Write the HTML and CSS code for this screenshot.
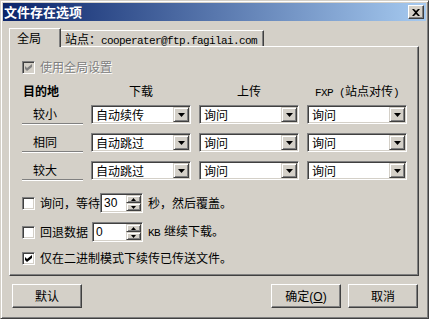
FILE: index.html
```html
<!DOCTYPE html>
<html lang="zh-CN">
<head>
    <meta charset="UTF-8">
    <title>文件存在选项</title>
    <link rel="stylesheet" href="styles.css">
</head>
<body>
    <div class="win">
        <div class="titlebar">
            <span class="title">文件存在选项</span>
            <span class="close">
                <svg width="8" height="7" viewBox="0 0 8 7"><path d="M0 0h2l2 2 2-2h2L5 3.5 8 7H6L4 5 2 7H0l3-3.5z" fill="#000"/></svg>
            </span>
        </div>
        <div class="content">
            <div class="tabs">
                <div class="tab active">全局</div>
                <div class="tab">站点：<span class="mono">cooperater@ftp.fagilai.com</span></div>
            </div>
            <div class="panel">
                <div class="check-row usecheck disabled">
                    <span class="cb checked"><svg width="7" height="7" viewBox="0 0 7 7"><path d="M0 2l2 2 5-4v3L2 7 0 5z" fill="#808080"/></svg></span>
                    使用全局设置
                </div>
                <div class="heads">
                    <div class="head first">目的地</div>
                    <div class="head">下载</div>
                    <div class="head">上传</div>
                    <div class="head"><span class="mono">FXP (</span>站点对传<span class="mono">)</span></div>
                </div>
                <div class="grid">
                    <div class="label">较小</div>
                    <div class="combo">自动续传<span class="arrow"><svg width="7" height="4" viewBox="0 0 7 4"><path d="M0 0h7L3.5 4z"/></svg></span></div>
                    <div class="combo">询问<span class="arrow"><svg width="7" height="4" viewBox="0 0 7 4"><path d="M0 0h7L3.5 4z"/></svg></span></div>
                    <div class="combo">询问<span class="arrow"><svg width="7" height="4" viewBox="0 0 7 4"><path d="M0 0h7L3.5 4z"/></svg></span></div>

                    <div class="label">相同</div>
                    <div class="combo">自动跳过<span class="arrow"><svg width="7" height="4" viewBox="0 0 7 4"><path d="M0 0h7L3.5 4z"/></svg></span></div>
                    <div class="combo">询问<span class="arrow"><svg width="7" height="4" viewBox="0 0 7 4"><path d="M0 0h7L3.5 4z"/></svg></span></div>
                    <div class="combo">询问<span class="arrow"><svg width="7" height="4" viewBox="0 0 7 4"><path d="M0 0h7L3.5 4z"/></svg></span></div>

                    <div class="label">较大</div>
                    <div class="combo">自动跳过<span class="arrow"><svg width="7" height="4" viewBox="0 0 7 4"><path d="M0 0h7L3.5 4z"/></svg></span></div>
                    <div class="combo">询问<span class="arrow"><svg width="7" height="4" viewBox="0 0 7 4"><path d="M0 0h7L3.5 4z"/></svg></span></div>
                    <div class="combo">询问<span class="arrow"><svg width="7" height="4" viewBox="0 0 7 4"><path d="M0 0h7L3.5 4z"/></svg></span></div>
                </div>
                <div class="check-row opt opt1">
                    <span class="cb"></span>
                    询问，等待
                    <div class="spin spin1">30<span class="spin-btns"><span class="sb"><svg width="5" height="3" viewBox="0 0 5 3"><path d="M0 3h5L2.5 0z"/></svg></span><span class="sb"><svg width="5" height="3" viewBox="0 0 5 3"><path d="M0 0h5L2.5 3z"/></svg></span></span></div>
                    <span class="after">秒，然后覆盖。</span>
                </div>
                <div class="check-row opt opt2">
                    <span class="cb"></span>
                    回退数据
                    <div class="spin spin2">0<span class="spin-btns"><span class="sb"><svg width="5" height="3" viewBox="0 0 5 3"><path d="M0 3h5L2.5 0z"/></svg></span><span class="sb"><svg width="5" height="3" viewBox="0 0 5 3"><path d="M0 0h5L2.5 3z"/></svg></span></span></div>
                    <span class="after"><span class="mono kb">KB</span>继续下载。</span>
                </div>
                <div class="check-row opt opt3">
                    <span class="cb checked"><svg width="7" height="7" viewBox="0 0 7 7"><path d="M0 2l2 2 5-4v3L2 7 0 5z" fill="#000"/></svg></span>
                    仅在二进制模式下续传已传送文件。
                </div>
            </div>
            <div class="buttons">
                <button class="btn">默认</button>
                <span class="spacer"></span>
                <button class="btn">确定<span class="latin">(<u>O</u>)</span></button>
                <button class="btn">取消</button>
            </div>
        </div>
    </div>
</body>
</html>
```

FILE: styles.css
```css
* {
    margin: 0;
    padding: 0;
    box-sizing: border-box;
}
body {
    font: 12px/14px "Noto Sans CJK SC", sans-serif;
    color: #000;
}
.win {
    width: 429px;
    height: 319px;
    background: #d4d0c8;
    border: 1px solid;
    border-color: #d4d0c8 #404040 #404040 #d4d0c8;
    box-shadow: inset 1px 1px #fff, inset -1px -1px #808080;
    padding: 2px;
}
.titlebar {
    height: 18px;
    background: linear-gradient(to right, #0a246a, #a6caf0);
    display: flex;
    align-items: center;
    justify-content: space-between;
    padding: 0 2px 0 1px;
}
.title {
    color: #fff;
    font-weight: bold;
    font-size: 13px;
}
.close {
    width: 16px;
    height: 14px;
    display: flex;
    align-items: center;
    justify-content: center;
    background: #d4d0c8;
    border: 1px solid;
    border-color: #fff #404040 #404040 #fff;
    box-shadow: inset -1px -1px #808080;
}
.content {
    padding: 7px 7px 0 6px;
}
.mono {
    font-family: "Liberation Mono", monospace;
    font-size: 11px;
    letter-spacing: -0.6px;
}
.tabs {
    display: flex;
    align-items: flex-end;
    height: 18px;
}
.tab {
    height: 16px;
    background: #d4d0c8;
    border-top: 1px solid #fff;
    border-right: 1px solid #404040;
    box-shadow: inset -1px 0 #808080;
    padding: 1px 6px 0 4px;
}
.tab.active {
    height: 19px;
    margin-bottom: -1px;
    position: relative;
    z-index: 1;
    border-left: 1px solid #fff;
    padding: 2px 19px 0 7px;
    width: 52px;
}
.panel {
    height: 230px;
    border: 1px solid;
    border-color: #fff #404040 #404040 #fff;
    box-shadow: inset -1px -1px #808080;
    padding-left: 12px;
}
.check-row {
    display: flex;
    align-items: center;
    height: 14px;
}
.cb {
    width: 13px;
    height: 13px;
    flex: none;
    margin-right: 5px;
    display: flex;
    align-items: center;
    justify-content: center;
    background: #fff;
    border: 1px solid;
    border-color: #808080 #fff #fff #808080;
    box-shadow: inset 1px 1px #404040, inset -1px -1px #d4d0c8;
}
.disabled {
    color: #808080;
    text-shadow: 1px 1px #fff;
}
.disabled .cb {
    background: #d4d0c8;
}
.usecheck {
    margin-top: 13px;
}
.heads,
.grid {
    display: grid;
    grid-template-columns: 61px 100px 100px 100px;
    column-gap: 8px;
}
.heads {
    margin-top: 10px;
}
.head {
    text-align: center;
}
.head.first {
    text-align: left;
    font-weight: bold;
    padding-left: 1px;
}
.grid {
    margin-top: 5px;
    row-gap: 9px;
}
.label {
    height: 19px;
    line-height: 18px;
    padding-left: 11px;
    border-bottom: 1px solid #808080;
    box-shadow: 0 1px #fff;
}
.combo {
    height: 19px;
    display: flex;
    align-items: center;
    padding: 1px 1px 1px 4px;
    background: #fff;
    border: 1px solid;
    border-color: #808080 #fff #fff #808080;
    box-shadow: inset 1px 1px #404040, inset -1px -1px #d4d0c8;
}
.arrow {
    margin-left: auto;
    width: 16px;
    height: 15px;
    display: flex;
    align-items: center;
    justify-content: center;
    background: #d4d0c8;
    border: 1px solid;
    border-color: #d4d0c8 #404040 #404040 #d4d0c8;
    box-shadow: inset 1px 1px #fff, inset -1px -1px #808080;
}
.opt {
    height: 20px;
}
.opt1 {
    margin-top: 13px;
}
.opt2 {
    margin-top: 9px;
}
.opt3 {
    margin-top: 8px;
    height: 16px;
}
.spin {
    height: 20px;
    display: flex;
    align-items: center;
    padding: 1px 1px 1px 3px;
    background: #fff;
    font-family: "Liberation Sans", sans-serif;
    border: 1px solid;
    border-color: #808080 #fff #fff #808080;
    box-shadow: inset 1px 1px #404040, inset -1px -1px #d4d0c8;
}
.spin1 {
    width: 43px;
}
.spin2 {
    width: 51px;
    margin-left: 4px;
}
.spin-btns {
    margin-left: auto;
    width: 15px;
    height: 16px;
    display: flex;
    flex-direction: column;
}
.sb {
    flex: 1;
    display: flex;
    align-items: center;
    justify-content: center;
    background: #d4d0c8;
    border: 1px solid;
    border-color: #d4d0c8 #404040 #404040 #d4d0c8;
    box-shadow: inset 1px 1px #fff, inset -1px -1px #808080;
}
.after {
    margin-left: 5px;
}
.kb {
    margin-right: 4px;
}
.buttons {
    display: flex;
    margin-top: 8px;
    padding: 0 1px 0 3px;
    gap: 7px;
}
.spacer {
    flex: 1;
}
.btn {
    width: 70px;
    height: 24px;
    font: inherit;
    background: #d4d0c8;
    border: 1px solid;
    border-color: #fff #404040 #404040 #fff;
    box-shadow: inset -1px -1px #808080;
}
.latin {
    font-family: "Liberation Sans", sans-serif;
}
```
